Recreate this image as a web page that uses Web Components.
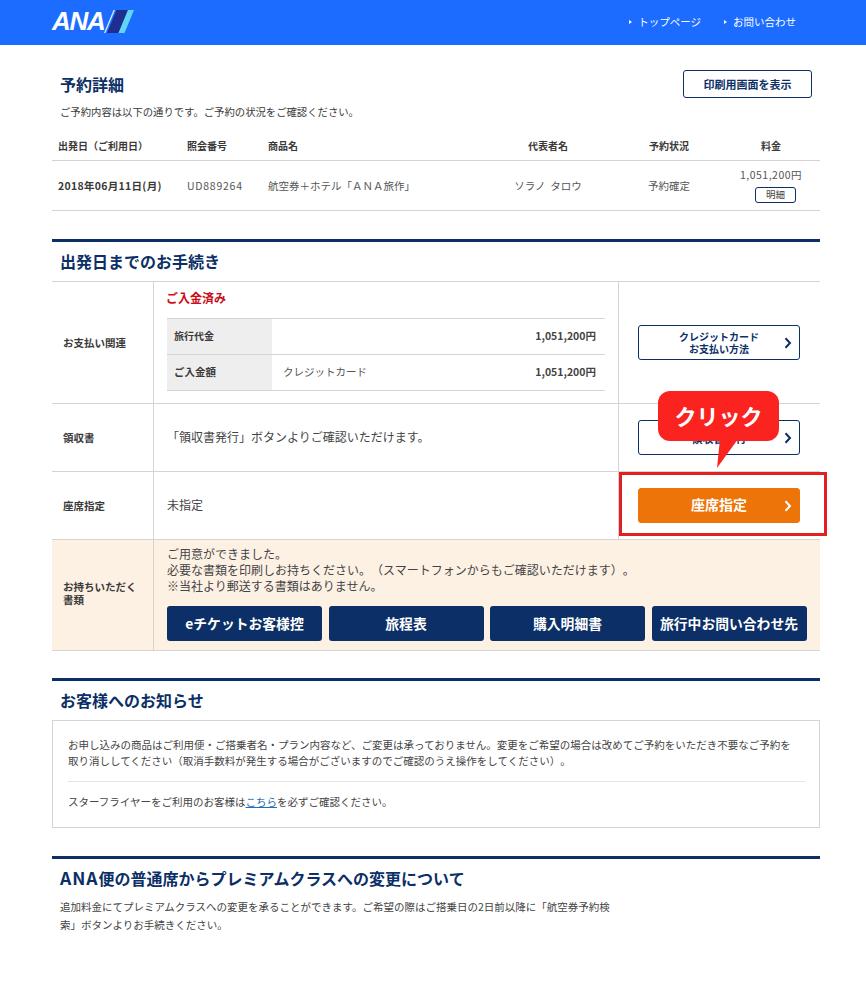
<!DOCTYPE html>
<html lang="ja">
<head>
<meta charset="utf-8">
<title>予約詳細</title>
<style>
html,body{margin:0;padding:0;background:#fff}
body{font-family:"Noto Sans CJK JP","Noto Sans",sans-serif;color:#3a3a3a;height:981px;overflow:hidden;text-spacing-trim:space-all}
</style>
</head>
<body>
<ana-page>
  <site-header></site-header>
  <title-bar>予約詳細</title-bar>
  <booking-summary></booking-summary>

  <page-section heading="出発日までのお手続き" gap="28">
    <proc-row label="お支払い関連" h="122">
      <pay-detail></pay-detail>
      <nav-btn slot="action">クレジットカード<br>お支払い方法</nav-btn>
    </proc-row>
    <proc-row label="領収書" h="68">
      <span>「領収書発行」ボタンよりご確認いただけます。</span>
      <nav-btn slot="action" size="11">領収書発行</nav-btn>
    </proc-row>
    <proc-row label="座席指定" h="68">
      <span>未指定</span>
      <nav-btn slot="action" variant="orange" size="14">座席指定</nav-btn>
    </proc-row>
    <docs-row label="お持ちいただく<br>書類"></docs-row>
  </page-section>

  <page-section heading="お客様へのお知らせ" gap="27">
    <notice-box></notice-box>
  </page-section>

  <page-section heading="&lt;span style='letter-spacing:1px;font-size:17.5px;line-height:1'&gt;ANA&lt;/span&gt;便の普通席からプレミアムクラスへの変更について" gap="28">
    <plain-text>追加料金にてプレミアムクラスへの変更を承ることができます。ご希望の際はご搭乗日の2日前以降に「航空券予約検<br>索」ボタンよりお手続きください。</plain-text>
  </page-section>

  <click-callout></click-callout>
</ana-page>

<script>
const NAVY = '#0b2f66';
function define(name, css, html, init) {
  customElements.define(name, class extends HTMLElement {
    connectedCallback() {
      if (this.shadowRoot) return;
      const root = this.attachShadow({mode: 'open'});
      const body = typeof html === 'function' ? html(this) : html;
      root.innerHTML = `<style>${css}</style>${body}`;
      if (init) init(this, root);
    }
  });
}

define('ana-page', `
  :host{display:block;position:relative;width:866px;font-family:"Noto Sans CJK JP","Noto Sans",sans-serif}
`, `<slot></slot>`);

define('site-header', `
  :host{display:flex;align-items:center;justify-content:space-between;height:45px;background:#1b6cff;padding:0 70px 0 52px;box-sizing:border-box;color:#fff}
  .logo{display:flex;align-items:flex-end;width:82px;height:23px;position:relative;top:-1px}
  .ana{width:52px;font:italic bold 26px/23px "Liberation Sans",sans-serif;letter-spacing:-1.3px;color:#fff;white-space:nowrap}
  nav{display:flex;gap:23px;font-size:10.5px;line-height:14px;position:relative;top:-.5px}
  a{display:flex;align-items:center;gap:6px;color:#fff;text-decoration:none}
  a::before{content:"";width:0;height:0;border-left:3px solid #fff;border-top:2.5px solid transparent;border-bottom:2.5px solid transparent}
`, `
  <div class="logo"><span class="ana">ANA</span>
    <svg width="30" height="23" viewBox="0 0 30 23">
      <polygon points="0,23 9.5,0 11,0 1.5,23" fill="#c4ecfb"/>
      <polygon points="3,23 12.5,0 24,0 14.5,23" fill="#1f2f8f"/>
      <polygon points="14.5,23 24,0 30,0 20.5,23" fill="#62d5f1"/>
    </svg>
  </div>
  <nav><a href="#">トップページ</a><a href="#">お問い合わせ</a></nav>
`);

define('title-bar', `
  :host{display:flex;align-items:center;justify-content:space-between;height:28px;margin:25px 54px 0 60px}
  h2{margin:0;font-size:16px;line-height:28px;font-weight:700;color:${NAVY}}
  a{display:flex;align-items:center;justify-content:center;box-sizing:border-box;width:129px;height:28px;border:1px solid ${NAVY};border-radius:3px;font-size:11px;font-weight:700;color:${NAVY};text-decoration:none}
`, `<h2><slot></slot></h2><a href="#">印刷用画面を表示</a>`);

define('booking-summary', `
  :host{display:block;margin:7px 46px 0 52px;font-size:10px;color:#3a3a3a}
  p{margin:0 0 11px 8px;font-size:10.35px;line-height:14px}
  .row{display:grid;grid-template-columns:129px 81px 218px 136px 106px 98px;align-items:center;border-bottom:1px solid #d4d4d4}
  .head{height:30px;font-weight:700}
  .data{height:49px;font-size:10.5px}
  .l{padding-left:6px}
  .c{text-align:center}
  b{font-size:10.5px;letter-spacing:.3px}
  .no{letter-spacing:.75px;color:#555}
  .g{color:#555}
  .fee{display:flex;flex-direction:column;align-items:center;letter-spacing:.5px;color:#555;line-height:15px;padding-bottom:2px}
  .fee a{display:flex;align-items:center;justify-content:center;box-sizing:border-box;width:41px;height:16px;margin:5px 0 0 9px;border:1px solid ${NAVY};border-radius:3px;font-size:9.5px;color:#444;text-decoration:none;letter-spacing:0}
`, `
  <p>ご予約内容は以下の通りです。ご予約の状況をご確認ください。</p>
  <div class="row head">
    <div class="l">出発日（ご利用日）</div><div class="l">照会番号</div><div class="l">商品名</div>
    <div class="c">代表者名</div><div class="c">予約状況</div><div class="c">料金</div>
  </div>
  <div class="row data">
    <div class="l"><b>2018年06月11日(月)</b></div><div class="l no">UD889264</div><div class="l g">航空券＋ホテル「ＡＮＡ旅作」</div>
    <div class="c g">ソラノ&nbsp;&nbsp;タロウ</div><div class="c g">予約確定</div>
    <div class="fee">1,051,200円<a href="#">明細</a></div>
  </div>
`);

define('page-section', `
  :host{display:block;margin:0 46px 0 52px}
  .rule{height:3px;background:${NAVY}}
  h2{margin:0;height:39px;padding-left:8px;font-size:16px;line-height:39px;font-weight:700;color:${NAVY};white-space:nowrap}
`, el => `<div class="rule"></div><h2>${el.getAttribute('heading')}</h2><slot></slot>`,
 el => { el.style.marginTop = el.getAttribute('gap') + 'px'; });

define('proc-row', `
  :host{display:grid;grid-template-columns:101px 1px 464px 1px 201px;border-top:1px solid #d4d4d4;box-sizing:border-box;font-size:12px;color:#444}
  .label{display:flex;align-items:center;padding:0 0 1px 11px;font-size:10.5px;font-weight:700;color:#3a3a3a}
  .v{background:#d4d4d4}
  .main{display:flex;align-items:center;padding:0 13px 2px}
  .action{display:flex;align-items:center;padding-left:19px}
`, el => `
  <div class="label">${el.getAttribute('label')}</div><div class="v"></div>
  <div class="main"><slot></slot></div><div class="v"></div>
  <div class="action"><slot name="action"></slot></div>
`, el => { el.style.height = el.getAttribute('h') + 'px'; });

define('pay-detail', `
  :host{display:block;width:438px;align-self:flex-start;padding-top:8px;font-size:10.5px}
  .st{font-size:12px;line-height:16px;font-weight:700;color:#c8101a;margin-bottom:12px;margin-left:-1px}
  .t{border-top:1px solid #d4d4d4}
  .r{display:grid;grid-template-columns:105px 1fr auto;align-items:center;height:35px;border-bottom:1px solid #d4d4d4}
  .k{align-self:stretch;display:flex;align-items:center;background:#eee;padding:0 0 2px 7px;font-weight:700;color:#3a3a3a}
  .k.s{font-size:10px}
  .m{padding:0 0 2px 11px;color:#555}
  .a{padding:0 9px 2px 0;font-weight:700;color:#444}
`, `
  <div class="st">ご入金済み</div>
  <div class="t">
    <div class="r"><div class="k s">旅行代金</div><div class="m"></div><div class="a">1,051,200円</div></div>
    <div class="r"><div class="k">ご入金額</div><div class="m">クレジットカード</div><div class="a">1,051,200円</div></div>
  </div>
`);

define('nav-btn', `
  :host{display:block;position:relative;box-sizing:border-box;width:162px;height:35px;border:1px solid ${NAVY};border-radius:3px;color:${NAVY};font-size:10px;line-height:12px;font-weight:700;text-align:center;cursor:pointer}
  :host([variant="orange"]){background:#ed7408;border-color:#ed7408;color:#fff}
  :host([variant="orange"]) .t{padding-bottom:3px;box-sizing:border-box}
  .t{display:flex;align-items:center;justify-content:center;height:100%;padding:0 22px}
  svg{position:absolute;right:7px;top:50%;margin-top:-6px}
`, el => `<div class="t"><span><slot></slot></span></div>
  <svg width="8" height="12" viewBox="0 0 8 12"><path d="M1.5 1.2 6 6 1.5 10.8" fill="none" stroke="${el.getAttribute('variant') === 'orange' ? '#fff' : NAVY}" stroke-width="2"/></svg>`,
 (el, root) => {
   const s = el.getAttribute('size');
   if (s) root.querySelector('.t').style.fontSize = s + 'px';
 });

define('docs-row', `
  :host{display:grid;grid-template-columns:101px 1px 1fr;height:110px;background:#fdf1e4;border-top:1px solid #d4d4d4;border-bottom:1px solid #d4d4d4;box-sizing:content-box;color:#444}
  .label{display:flex;align-items:center;padding:0 0 4px 11px;box-sizing:border-box;font-size:10.5px;line-height:13px;font-weight:700;color:#3a3a3a}
  .v{background:#d4d4d4}
  .main{padding:7px 13px 0 13px}
  p{margin:0 0 11px;font-size:12px;line-height:16px;position:relative;top:-1px}
  .btns{display:grid;grid-template-columns:repeat(4,155px);column-gap:6.5px}
  a{display:flex;align-items:center;justify-content:center;box-sizing:border-box;height:35px;padding-bottom:2px;background:${NAVY};border-radius:3px;color:#fff;font-size:13.8px;font-weight:700;text-decoration:none;white-space:nowrap}
`, el => `
  <div class="label"><span>${el.getAttribute('label')}</span></div><div class="v"></div>
  <div class="main">
    <p>ご用意ができました。<br>必要な書類を印刷しお持ちください。（スマートフォンからもご確認いただけます）。<br>※当社より郵送する書類はありません。</p>
    <div class="btns"><a href="#">eチケットお客様控</a><a href="#">旅程表</a><a href="#">購入明細書</a><a href="#">旅行中お問い合わせ先</a></div>
  </div>
`);

define('notice-box', `
  :host{display:block;box-sizing:border-box;height:108px;border:1px solid #d4d4d4;padding:16px 14px 0 15px;font-size:10.5px;line-height:16px;color:#444;white-space:nowrap}
  p{margin:0}
  hr{border:0;border-top:1px solid #e4e4e4;margin:12px 0 12px}
  a{color:#1f6fb5}
`, `
  <p>お申し込みの商品はご利用便・ご搭乗者名・プラン内容など、ご変更は承っておりません。変更をご希望の場合は改めてご予約をいただき不要なご予約を<br>取り消ししてください（取消手数料が発生する場合がございますのでご確認のうえ操作をしてください）。</p>
  <hr>
  <p>スターフライヤーをご利用のお客様は<a href="#">こちら</a>を必ずご確認ください。</p>
`);

define('plain-text', `
  :host{display:block;padding:0 0 0 8px;font-size:10.5px;line-height:18px;color:#444;white-space:nowrap}
`, `<slot></slot>`);

define('click-callout', `
  :host{display:block;position:absolute;left:0;top:0;width:0;height:0}
  .frame{position:absolute;left:619px;top:472px;width:208px;height:64px;box-sizing:border-box;border:3px solid #e3201f}
  .bubble{position:absolute;left:658px;top:391px;width:121px;height:50px;border-radius:12px;background:#fb2320;color:#fff;font-size:22px;font-weight:700;line-height:50px;text-align:center;padding-bottom:0;white-space:nowrap}
  .bubble span{position:relative;top:-1px}
  svg{position:absolute;left:716px;top:439px}
`, `
  <div class="frame"></div>
  <svg width="24" height="30" viewBox="0 0 24 30"><polygon points="4,0 22,0 1,29" fill="#fb2320"/></svg>
  <div class="bubble"><span>クリック</span></div>
`);
</script>
</body>
</html>
